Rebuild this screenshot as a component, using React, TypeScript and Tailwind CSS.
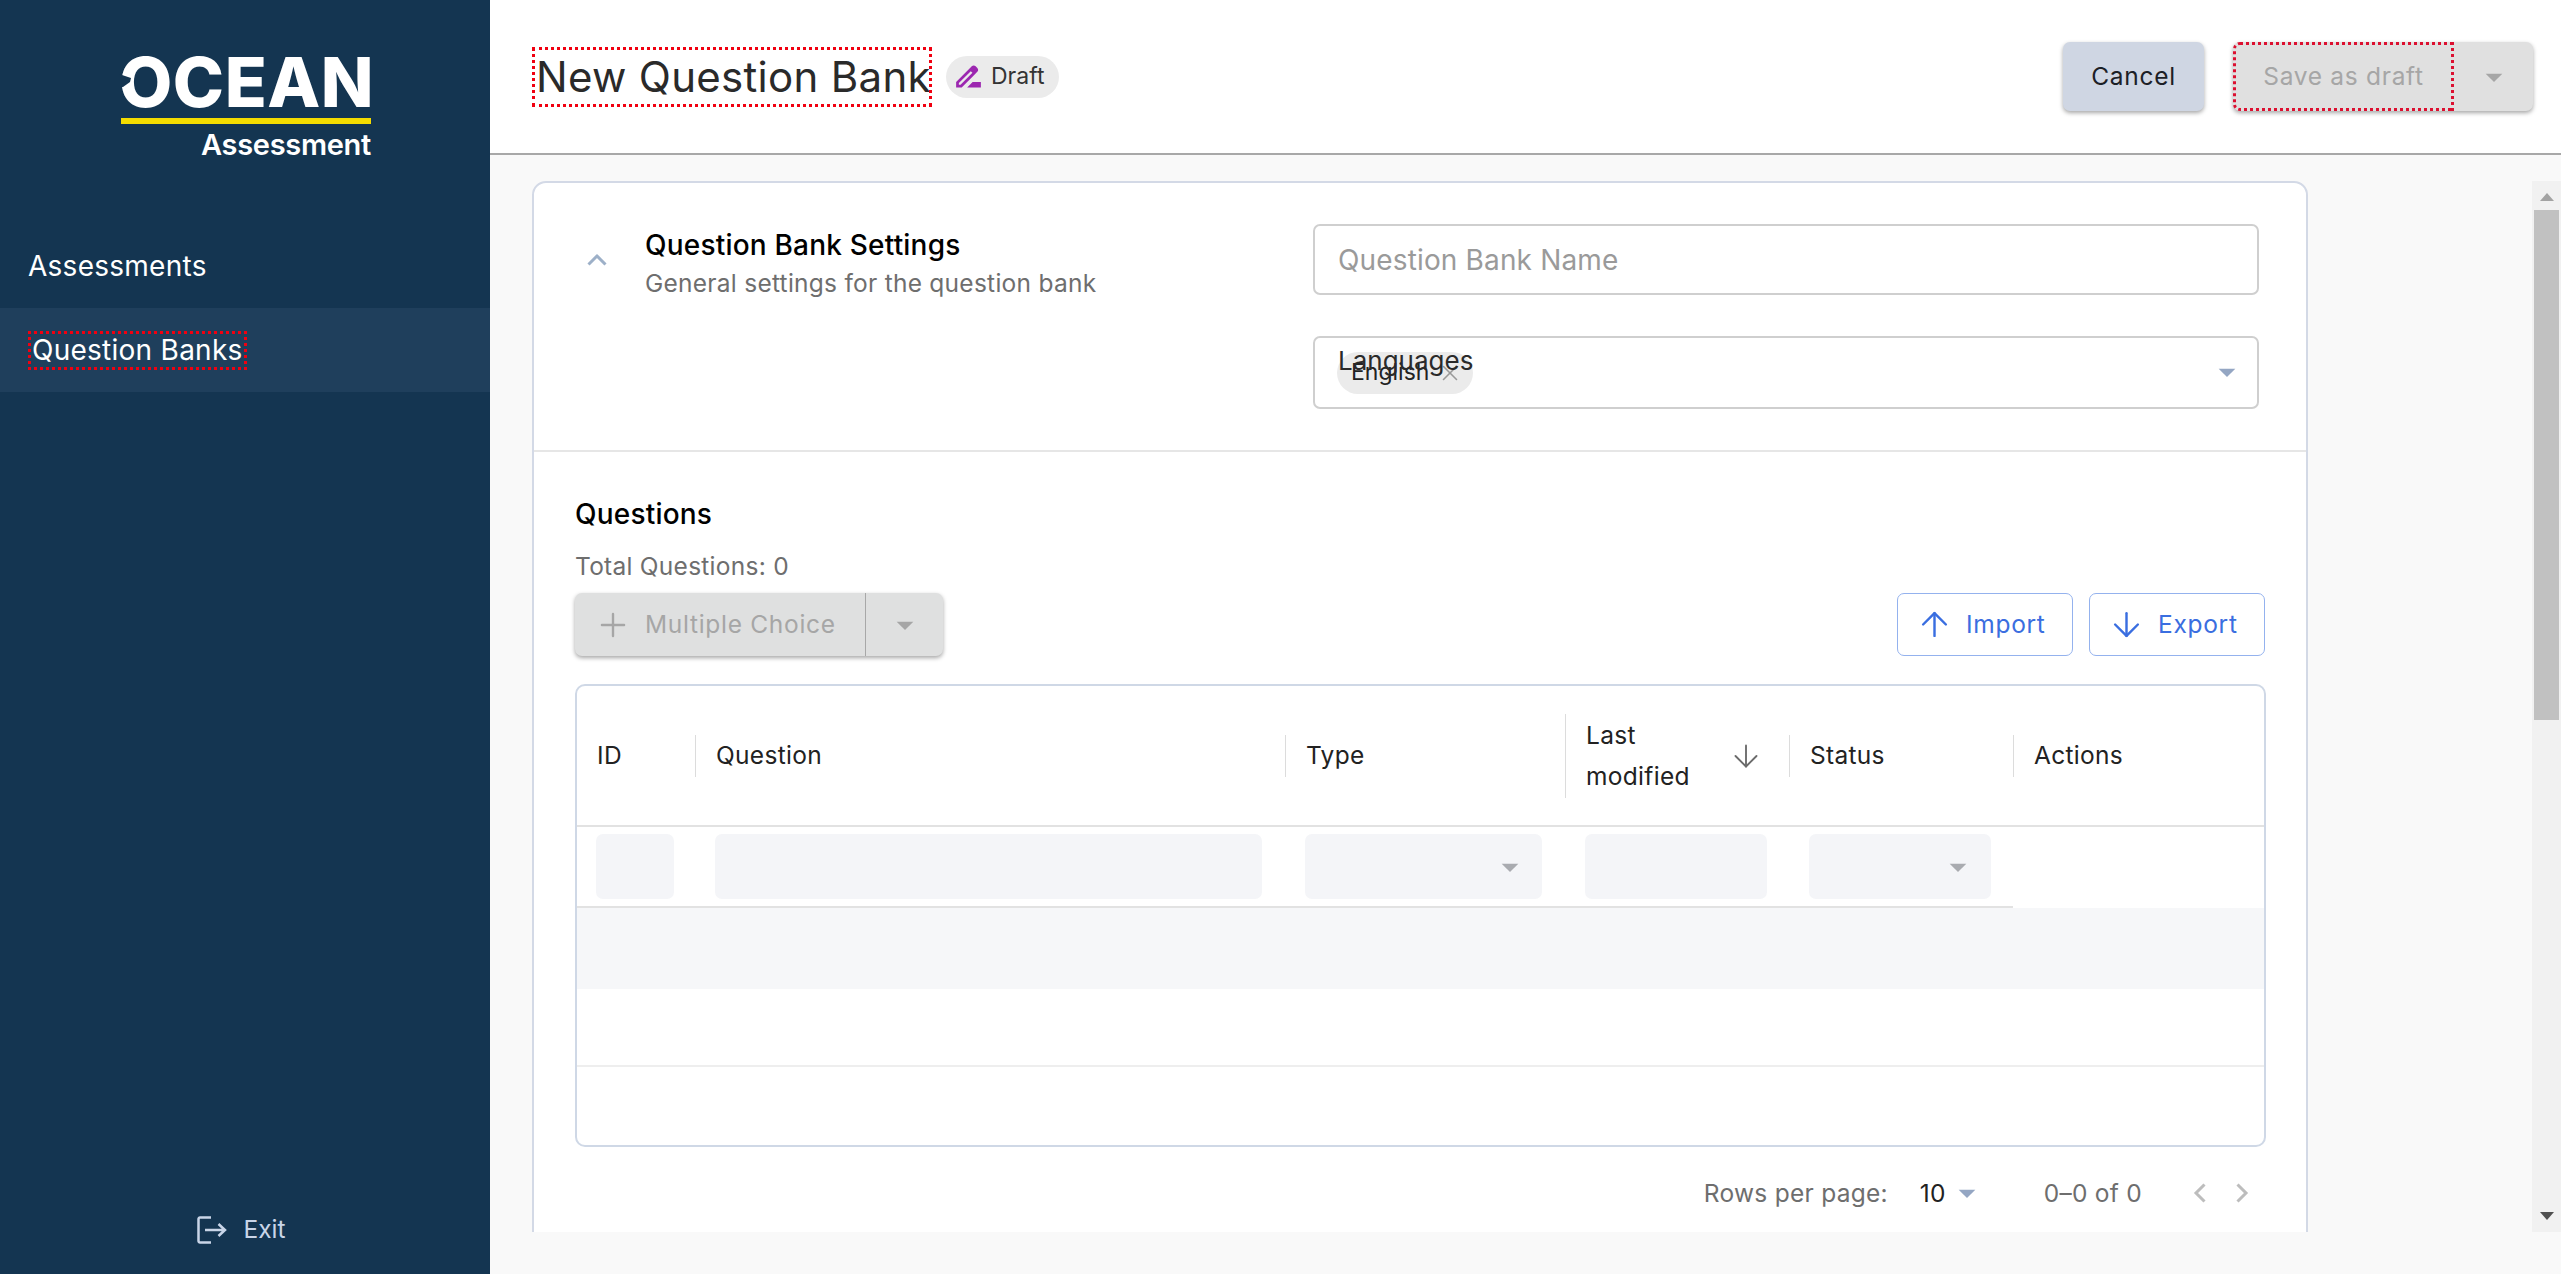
import { ArrowDown, ArrowUp, Plus, X } from 'lucide-react';

function DropArrow({ className }: { className: string }) {
  return (
    <svg viewBox="0 0 24 24" className={`h-[40px] w-[40px] fill-current ${className}`}>
      <path d="M7 10l5 5 5-5z" />
    </svg>
  );
}

function DraftIcon() {
  return (
    <svg viewBox="0 0 24 24" className="h-[33px] w-[33px] fill-[#9c27b0]">
      <path d="M18.41 5.8L17.2 4.59c-.78-.78-2.05-.78-2.83 0l-2.68 2.68L3 15.96V20h4.04l8.74-8.74 2.63-2.63c.79-.78.79-2.05 0-2.83zM6.21 18H5v-1.21l8.66-8.66 1.21 1.21L6.21 18zM11 20l4-4h6v4H11z" />
    </svg>
  );
}

function Sidebar() {
  return (
    <aside className="flex h-full w-[490px] shrink-0 flex-col bg-[#143551] text-white">
      <div className="flex h-[266px] flex-col items-center pt-[47px]">
        <div className="relative flex w-[252px] flex-col">
          <div className="h-[70px] text-center text-[69px] leading-[70px] font-extrabold tracking-[0.5px]">
            OCEAN
          </div>
          {/* notch in the O */}
          <svg viewBox="0 0 14 14" className="absolute top-[26px] left-[0px] h-[14px] w-[14px] fill-[#143551]">
            <path d="M0 1l12 4-1 4-7 5H0z" />
          </svg>
          <div className="mt-[1px] ml-[2px] h-[6px] bg-[#f4dc00]" />
          <div className="mt-[4px] text-right text-[29px] leading-[33px] font-semibold tracking-[-0.3px]">Assessment</div>
        </div>
      </div>
      <nav className="flex flex-col text-[28px] tracking-[0.26px]">
        <div className="flex h-[84px] -translate-y-[42px] items-center px-[28px]">Assessments</div>
        <div className="flex h-[84px] -mt-[42px] items-center bg-[#1f3f5c] px-[28px]">
          <span className="px-[4px] leading-[39px] outline-[3px] outline-dotted -outline-offset-[3px] outline-[#f00010]">Question Banks</span>
        </div>
      </nav>
      <div className="mt-auto mb-[26px] flex items-center justify-center gap-[16px] text-[24.5px] text-[#c9d5e8]">
        <svg viewBox="0 0 30 28" className="h-[28px] w-[30px] fill-none stroke-current" strokeWidth="2.500">
          <path d="M14 1.500H3A1.500 1.500 0 0 0 1.500 3v22A1.500 1.500 0 0 0 3 26.500h11" />
          <path d="M8 14h20M21.500 8 28 14l-6.500 6" />
        </svg>
        <span className="mr-[7px]">Exit</span>
      </div>
    </aside>
  );
}

function Header() {
  return (
    <header className="flex h-[155px] shrink-0 items-center border-b-[2px] border-[#a8a8a8] bg-white pr-[28px] pl-[42px]">
      <h1 className="flex h-[60px] w-[400px] items-center pl-[4px] text-[42px] tracking-[0.3px] whitespace-nowrap text-[#2a2a2a] outline-[3px] outline-dotted -outline-offset-[3px] outline-[#f00010]">
        New Question Bank
      </h1>
      <div className="ml-[14px] flex h-[42px] w-[113px] items-center gap-[6px] rounded-full bg-[#ebebeb] pl-[6px] text-[23px] text-[#333]">
        <DraftIcon />
        <span>Draft</span>
      </div>
      <button className="ml-auto h-[69px] w-[141px] rounded-[7px] bg-[#cfd6e3] text-[24.5px] tracking-[0.7px] text-[#1c2026] shadow-[0_2px_4px_rgba(0,0,0,0.35)]">
        Cancel
      </button>
      <div className="ml-[29px] flex h-[69px] w-[300px] rounded-[7px] bg-[#e0e0e0] text-[24.5px] tracking-[0.7px] text-[#a6a6a6] shadow-[0_2px_4px_rgba(0,0,0,0.35)]">
        <span className="flex w-[221px] items-center justify-center rounded-l-[7px] outline-[3px] outline-dotted -outline-offset-[3px] outline-[#dc1030]">
          Save as draft
        </span>
        <span className="flex flex-1 items-center justify-center">
          <DropArrow className="text-[#a6a6a6]" />
        </span>
      </div>
    </header>
  );
}

function Settings() {
  return (
    <section className="flex h-[269px] shrink-0 border-b-[2px] border-[#e6e6e6] pt-[41px]">
      <div className="flex w-[779px] shrink-0">
        <div className="flex w-[111px] justify-center pt-[29px] pl-[14px]">
          <svg viewBox="0 0 20 13" className="h-[13px] w-[20px] fill-none stroke-[#9db0c8]" strokeWidth="3">
            <path d="M1.500 11.500 10 3l8.500 8.500" />
          </svg>
        </div>
        <div>
          <div className="text-[28px] leading-[42px] font-[450] tracking-[0.2px] text-black">Question Bank Settings</div>
          <div className="-mt-[1px] text-[24.5px] leading-[36px] tracking-[0.26px] text-[#6e6e6e]">General settings for the question bank</div>
        </div>
      </div>
      <div className="flex w-[946px] flex-col gap-[41px]">
        <div className="flex h-[71px] items-center rounded-[7px] border-[2px] border-[#cfcfcf] pl-[23px] text-[28px] tracking-[0.15px] text-[#9a9a9a]">
          Question Bank Name
        </div>
        <div className="relative flex h-[73px] items-center rounded-[7px] border-[2px] border-[#cfcfcf] pl-[22px]">
          <div className="flex h-[42px] w-[136px] items-center rounded-full bg-[#ebebeb] pl-[14px] text-[23px] text-[#222]">
            English
            <X className="ml-[8px] h-[26px] w-[26px] text-[#999999]" strokeWidth={1.5} />
          </div>
          <span className="absolute top-[5px] left-[23px] text-[26px] leading-[36px] text-[#2a2a2a]">Languages</span>
          <DropArrow className="absolute top-[14px] right-[10px] text-[#94a6c3]" />
        </div>
      </div>
    </section>
  );
}

const headers = [
  { label: 'ID' },
  { label: 'Question' },
  { label: 'Type' },
  { label: 'Last modified', tall: true },
  { label: 'Status' },
  { label: 'Actions' },
];

function QuestionsTable() {
  const filterBox = 'h-[65px] rounded-[7px] bg-[#f4f5f8]';
  return (
    <div className="h-[463px] shrink-0 rounded-[10px] border-[2px] border-[#cfd8e6]">
      <div className="grid h-[141px] grid-cols-[118px_590px_280px_224px_224px_1fr] items-center border-b-[2px] border-[#e2e2e2] text-[24.5px] tracking-[0.3px] text-[#222]">
        {headers.map((h, i) => (
          <div key={h.label} className={`relative flex items-center pl-[20px] ${h.tall ? 'h-[84px] leading-[41px]' : 'h-[42px]'} ${i > 0 ? 'border-l-[1px] border-[#dcdcdc]' : ''}`}>
            {h.tall ? (
              <>
                <span className="w-[120px]">Last modified</span>
                <ArrowDown className="absolute top-[24px] left-[162px] h-[36px] w-[36px] text-[#6b6b6b]" strokeWidth={1.25} />
              </>
            ) : (
              h.label
            )}
          </div>
        ))}
      </div>
      <div className="grid h-[81px] w-[1436px] grid-cols-[118px_590px_280px_224px_224px] border-b-[2px] border-[#e2e2e2] pt-[7px]">
        <div className="pr-[21px] pl-[19px]"><div className={filterBox} /></div>
        <div className="pr-[23px] pl-[20px]"><div className={filterBox} /></div>
        <div className="pr-[23px] pl-[20px]">
          <div className={`${filterBox} flex items-center justify-end pr-[12px]`}>
            <DropArrow className="text-[#a9abb0]" />
          </div>
        </div>
        <div className="pr-[22px] pl-[20px]"><div className={filterBox} /></div>
        <div className="pr-[22px] pl-[20px]">
          <div className={`${filterBox} flex items-center justify-end pr-[13px]`}>
            <DropArrow className="text-[#a9abb0]" />
          </div>
        </div>
      </div>
      <div className="h-[81px] bg-[#f6f7f9]" />
      <div className="h-[78px] border-b-[2px] border-[#eeeeee]" />
    </div>
  );
}

function Questions() {
  const outlineBtn = 'flex h-[63px] w-[176px] items-center gap-[12px] rounded-[7px] border-[1.5px] border-[#94b2ee] pl-[17px] text-[24.5px] tracking-[0.7px] text-[#3a6ee0]';
  return (
    <section className="flex flex-col pt-[42px] pr-[40px] pl-[41px]">
      <div className="text-[28px] leading-[40px] font-[450] tracking-[0.2px] text-black">Questions</div>
      <div className="mt-[14px] text-[24.5px] leading-[36px] tracking-[0.26px] text-[#6e6e6e]">Total Questions: 0</div>
      <div className="mt-[9px] flex justify-between">
        <div className="flex h-[63px] w-[368px] rounded-[7px] bg-[#dfe0e0] text-[24.5px] tracking-[0.7px] text-[#a6a6a6] shadow-[0_2px_4px_rgba(0,0,0,0.35)]">
          <span className="flex w-[291px] items-center gap-[13px] border-r-[1px] border-[#a8a8a8] pl-[19px]">
            <Plus className="h-[38px] w-[38px]" strokeWidth={1.5} />
            Multiple Choice
          </span>
          <span className="flex flex-1 items-center justify-center">
            <DropArrow className="text-[#a6a6a6]" />
          </span>
        </div>
        <div className="mr-[1px] flex gap-[16px]">
          <button className={outlineBtn}>
            <ArrowUp className="h-[39px] w-[39px]" strokeWidth={1.5} />
            Import
          </button>
          <button className={outlineBtn}>
            <ArrowDown className="h-[39px] w-[39px]" strokeWidth={1.5} />
            Export
          </button>
        </div>
      </div>
      <div className="mt-[28px]">
        <QuestionsTable />
      </div>
      <div className="flex h-[92px] shrink-0 items-center justify-end pr-[17px] text-[24.5px] tracking-[0.26px] text-[#6e6e6e]">
        <span>Rows per page:</span>
        <span className="ml-[32px] text-[#222]">10</span>
        <DropArrow className="ml-[1px] text-[#94a6c3]" />
        <span className="ml-[57px]">0–0 of 0</span>
        <svg viewBox="0 0 13 20" className="ml-[51px] h-[20px] w-[13px] fill-none stroke-[#bdbdbd]" strokeWidth="3">
          <path d="M11.500 1.500 3 10l8.500 8.500" />
        </svg>
        <svg viewBox="0 0 13 20" className="ml-[30px] h-[20px] w-[13px] fill-none stroke-[#bdbdbd]" strokeWidth="3">
          <path d="M1.500 1.500 10 10l-8.500 8.500" />
        </svg>
      </div>
    </section>
  );
}

function FakeScrollbar() {
  return (
    <div className="ml-auto flex h-full w-[29px] flex-col items-center bg-[#f1f1f1]">
      <svg viewBox="0 0 14 8" className="mt-[12px] h-[8px] w-[14px] shrink-0 fill-[#a3a3a3]">
        <path d="M7 0l7 8H0z" />
      </svg>
      <div className="mt-[9px] h-[510px] w-[25px] bg-[#c1c1c1]" />
      <div className="flex-1" />
      <svg viewBox="0 0 14 8" className="mb-[12px] h-[8px] w-[14px] shrink-0 fill-[#505050]">
        <path d="M7 8L0 0h14z" />
      </svg>
    </div>
  );
}

export default function App() {
  return (
    <div className="flex h-screen w-full overflow-hidden bg-[#f9f9f9] font-['Inter',sans-serif]">
      <Sidebar />
      <main className="flex min-w-0 flex-1 flex-col">
        <Header />
        <div className="mt-[26px] flex h-[1051px] overflow-hidden pl-[42px]">
          <div className="flex h-[1200px] w-[1776px] shrink-0 flex-col rounded-[14px] border-[2px] border-[#d3d9e6] bg-white">
            <Settings />
            <Questions />
          </div>
          <FakeScrollbar />
        </div>
      </main>
    </div>
  );
}
